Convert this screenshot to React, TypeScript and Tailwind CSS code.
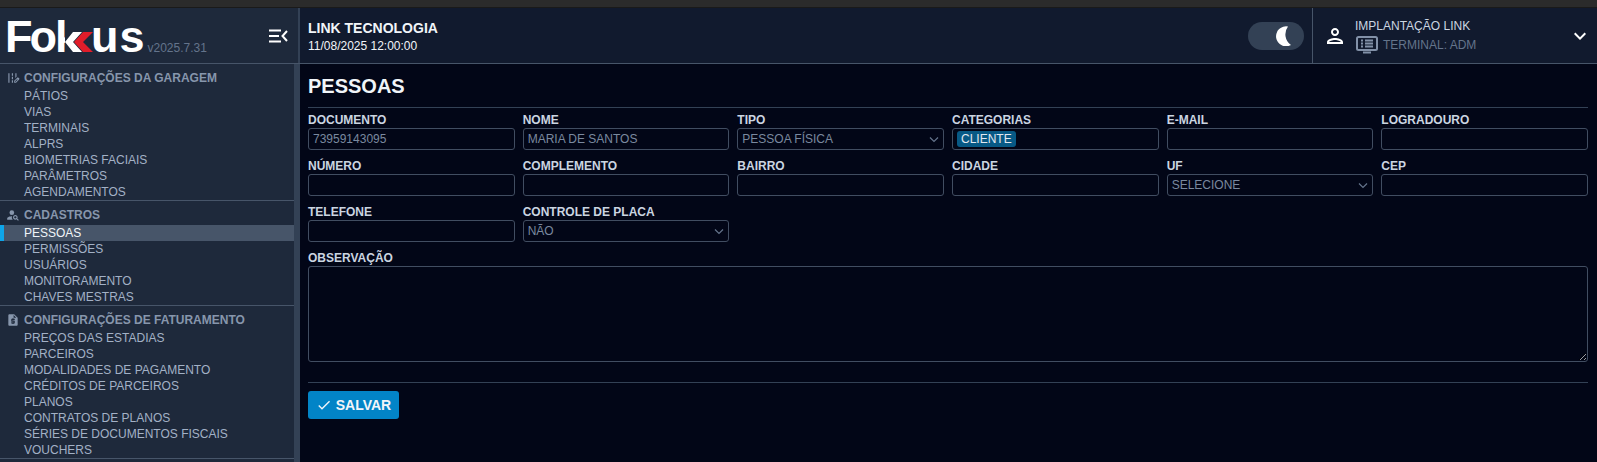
import { MdEditRoad, MdPersonSearch, MdRequestQuote, MdOutlinePerson, MdKeyboardArrowDown, MdCheck } from "react-icons/md";

const groups = [
  {
    title: "CONFIGURAÇÕES DA GARAGEM",
    icon: MdEditRoad,
    items: ["PÁTIOS", "VIAS", "TERMINAIS", "ALPRS", "BIOMETRIAS FACIAIS", "PARÂMETROS", "AGENDAMENTOS"],
  },
  {
    title: "CADASTROS",
    icon: MdPersonSearch,
    items: ["PESSOAS", "PERMISSÕES", "USUÁRIOS", "MONITORAMENTO", "CHAVES MESTRAS"],
  },
  {
    title: "CONFIGURAÇÕES DE FATURAMENTO",
    icon: MdRequestQuote,
    items: [
      "PREÇOS DAS ESTADIAS",
      "PARCEIROS",
      "MODALIDADES DE PAGAMENTO",
      "CRÉDITOS DE PARCEIROS",
      "PLANOS",
      "CONTRATOS DE PLANOS",
      "SÉRIES DE DOCUMENTOS FISCAIS",
      "VOUCHERS",
    ],
  },
];

function Label({ text }: { text: string }) {
  return <div className="h-[16px] text-[12px] leading-[16px] font-bold text-[#cbd5e1] mt-[4px]">{text}</div>;
}

function Field({ label, value }: { label: string; value?: string }) {
  return (
    <div>
      <Label text={label} />
      <div className="h-[22px] border border-[#414d61] rounded-[3px] px-[4px] text-[12px] leading-[20px] text-[#7a899f]">
        {value}
      </div>
    </div>
  );
}

function SelectField({ label, value }: { label: string; value: string }) {
  return (
    <div>
      <Label text={label} />
      <div className="h-[22px] border border-[#414d61] rounded-[3px] pl-[4px] pr-[3px] text-[12px] leading-[20px] text-[#7a899f] flex items-center justify-between">
        <span>{value}</span>
        <svg width="12" height="12" viewBox="0 0 12 12" fill="none" stroke="#64748b" strokeWidth="1.2">
          <path d="M2 4.5 L6 8.5 L10 4.5" />
        </svg>
      </div>
    </div>
  );
}

export default function App() {
  return (
    <div className="h-[462px] overflow-hidden flex flex-col bg-[#020617] font-['Liberation_Sans',sans-serif]">
      <div className="h-[8px] bg-[#2b2b2b] border-b border-[#1a1a1a] shrink-0"></div>
      <div className="h-[56px] shrink-0 flex bg-[#111a2e] border-b border-[#475569]">
        <div className="w-[300px] shrink-0 bg-[#1e293b] border-r-2 border-[#334155] flex items-center pl-[5px] relative">
          <div className="flex items-baseline mt-[2px]">
            <span className="text-[45px] leading-[40px] font-bold text-white tracking-[-3px]">F</span>
            <span className="text-[45px] leading-[40px] font-bold text-white tracking-[-2px]">o</span>
            <span className="w-[10px] text-[45px] leading-[40px] font-bold text-white [clip-path:inset(-10px_0_-10px_0)]">k</span>
            <svg width="28" height="20" viewBox="0 0 28 20" className="shrink-0 mr-[-2px]">
              <path d="M8 0 H17 L8 10 L17 20 H8 L0 10 Z" fill="#ffffff" />
              <path d="M18 0 H28 L18 10 L28 20 H18 L9 10 Z" fill="#e11d2a" />
            </svg>
            <span className="text-[45px] leading-[40px] font-bold text-white tracking-[1px]">us</span>
            <span className="text-[12px] text-[#64748b] ml-[2px]">v2025.7.31</span>
          </div>
          <svg width="19" height="14" viewBox="0 0 19 14" className="absolute right-[10px] top-[21px]" fill="none" stroke="#ffffff" strokeWidth="2">
            <path d="M0 1.5 H12 M0 7 H10 M0 12.5 H12 M18 2 L13.5 7 L18 12" />
          </svg>
        </div>
        <div className="flex-1 flex items-center justify-between">
          <div className="pl-[8px] pt-[2px] text-[#f1f5f9]">
            <div className="text-[14px] leading-[18px] font-bold">LINK TECNOLOGIA</div>
            <div className="text-[12px] leading-[16px] mt-[1px]">11/08/2025 12:00:00</div>
          </div>
          <div className="flex items-center h-full">
            <div className="w-[56px] h-[28px] rounded-full bg-[#334155] flex items-center justify-end pr-[12px] mr-[8px]">
              <svg width="16" height="20" viewBox="0 0 16 20">
                <path d="M12 0.5 A10 10 0 1 0 15 19 A13 13 0 0 1 12 0.5 Z" fill="#ffffff" />
              </svg>
            </div>
            <div className="w-[285px] h-full border-l border-[#475569] flex items-center pl-[10px] pr-[5px]">
              <MdOutlinePerson className="text-white text-[24px] shrink-0" />
              <div className="ml-[8px]">
                <div className="text-[12px] leading-[16px] text-[#cbd5e1]">IMPLANTAÇÃO LINK</div>
                <div className="flex items-center mt-[2px]">
                  <svg width="24" height="18" viewBox="0 0 24 18" fill="none" stroke="#8291a8" strokeWidth="2">
                    <rect x="2" y="1" width="20" height="13" rx="1.5" />
                    <path d="M6 4.5 H8 M10 4.5 H18 M6 7.5 H8 M10 7.5 H18 M6 10.5 H8 M10 10.5 H18 M8 16.5 H16" />
                  </svg>
                  <span className="text-[12px] text-[#64748b] ml-[4px]">TERMINAL: ADM</span>
                </div>
              </div>
              <MdKeyboardArrowDown className="text-white text-[24px] ml-auto" />
            </div>
          </div>
        </div>
      </div>

      <div className="flex flex-1 min-h-0">
        <div className="w-[300px] shrink-0 flex">
          <div className="w-[294px] bg-[#1e293b]">
            {groups.map((g) => (
              <div key={g.title} className="border-b border-[#475569]">
                <div className="h-[24px] flex items-center pt-[3px] pl-[6px] text-[12px] font-bold text-[#8796ac]">
                  <g.icon className="text-[14px] w-[14px] mr-[4px] shrink-0" />
                  <span>{g.title}</span>
                </div>
                {g.items.map((item) =>
                  item === "PESSOAS" ? (
                    <div key={item} className="h-[16px] leading-[16px] text-[12px] text-[#f1f5f9] bg-[#475569] border-l-[4px] border-[#0ea5e9] pl-[20px]">
                      {item}
                    </div>
                  ) : (
                    <div key={item} className="h-[16px] leading-[16px] text-[12px] text-[#a3b1c6] pl-[24px]">
                      {item}
                    </div>
                  )
                )}
              </div>
            ))}
          </div>
          <div className="w-[6px] bg-[#334155]"></div>
        </div>

        <div className="flex-1 pl-[8px] pr-[9px] min-w-0">
          <div className="h-[44px] border-b border-[#334155] flex items-center">
            <h1 className="text-[20px] font-bold text-[#f1f5f9]">PESSOAS</h1>
          </div>
          <div className="grid grid-cols-6 gap-x-[8px] gap-y-[4px]">
            <Field label="DOCUMENTO" value="73959143095" />
            <Field label="NOME" value="MARIA DE SANTOS" />
            <SelectField label="TIPO" value="PESSOA FÍSICA" />
            <div>
              <Label text="CATEGORIAS" />
              <div className="h-[22px] border border-[#414d61] rounded-[3px] pl-[4px] flex items-center">
                <span className="h-[16px] leading-[16px] px-[4px] bg-[#075985] rounded-[3px] text-[12px] text-[#e2e8f0]">CLIENTE</span>
              </div>
            </div>
            <Field label="E-MAIL" />
            <Field label="LOGRADOURO" />
            <Field label="NÚMERO" />
            <Field label="COMPLEMENTO" />
            <Field label="BAIRRO" />
            <Field label="CIDADE" />
            <SelectField label="UF" value="SELECIONE" />
            <Field label="CEP" />
            <Field label="TELEFONE" />
            <SelectField label="CONTROLE DE PLACA" value="NÃO" />
            <div className="col-span-6">
              <Label text="OBSERVAÇÃO" />
              <textarea readOnly className="block w-full h-[96px] border border-[#414d61] rounded-[3px] bg-transparent"></textarea>
            </div>
          </div>
          <div className="border-t border-[#334155] mt-[20px] pt-[8px]">
            <button className="h-[28px] w-[91px] bg-[#0284c7] rounded-[3px] flex items-center justify-center text-[14px] font-bold text-[#f1f5f9]">
              <MdCheck className="text-[16px] mr-[4px]" />
              SALVAR
            </button>
          </div>
        </div>
      </div>
    </div>
  );
}
